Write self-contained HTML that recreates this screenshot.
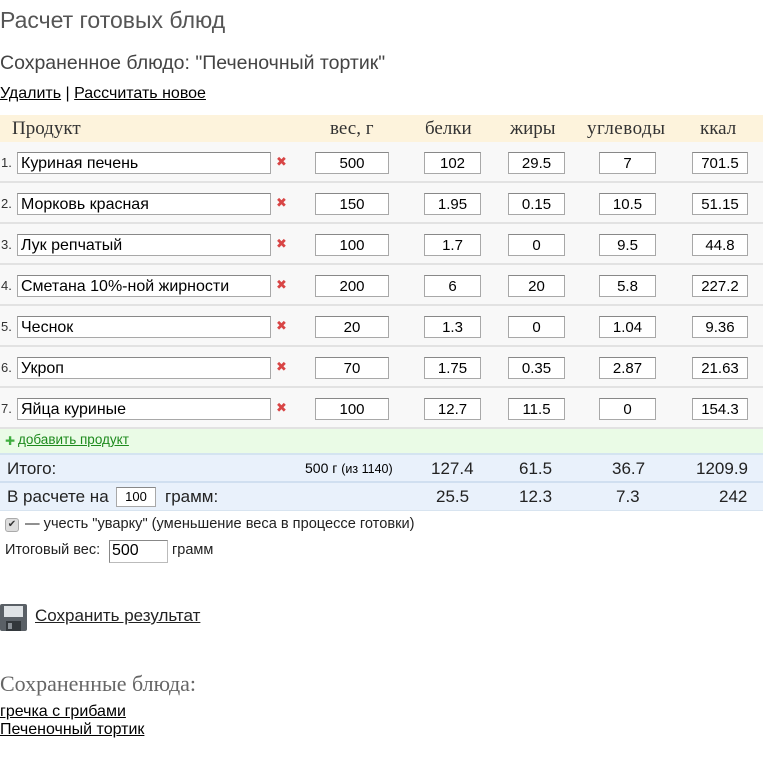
<!DOCTYPE html>
<html><head><meta charset="utf-8"><style>
*{margin:0;padding:0;box-sizing:border-box}
body{width:770px;height:770px;background:#fff;font-family:"Liberation Sans","DejaVu Sans",sans-serif;color:#000;position:relative;overflow:hidden}
.a{position:absolute;white-space:nowrap}
.serif{font-family:"Liberation Serif","DejaVu Serif",serif}
u{text-decoration:underline}
.row{position:absolute;left:0;width:763px;height:41px;background:#f8f8f8;border-bottom:2px solid #e2e2e2}
.in{position:absolute;height:22px;background:#fff;border:1px solid #a8a8a8;border-top-color:#888;font-size:15px;line-height:21px;text-align:center}
.p{text-align:left;padding-left:3px;font-size:16px}
.x{position:absolute;color:#d84545;font-size:13px;font-weight:bold}
.n{position:absolute;font-size:13px;color:#333}
.h{position:absolute;font-size:19px;top:118px;color:#333}
.t{position:absolute;font-size:17px;color:#222}
</style></head><body>
<div class="a" style="left:0;top:7px;font-size:23px;color:#555">Расчет готовых блюд</div>
<div class="a" style="left:0;top:52px;font-size:19.5px;color:#444">Сохраненное блюдо: "Печеночный тортик"</div>
<div class="a" style="left:0;top:85px;font-size:16px"><u>Удалить</u> | <u>Рассчитать новое</u></div>

<div class="a" style="left:0;top:115px;width:763px;height:27px;background:#fdf3dc"></div>
<div class="h serif" style="left:12px">Продукт</div>
<div class="h serif" style="left:330px">вес, г</div>
<div class="h serif" style="left:425px">белки</div>
<div class="h serif" style="left:510px">жиры</div>
<div class="h serif" style="left:587px;letter-spacing:0.5px">углеводы</div>
<div class="h serif" style="left:700px">ккал</div>

<div class="row" style="top:142px"></div>
<div class="row" style="top:183px"></div>
<div class="row" style="top:224px"></div>
<div class="row" style="top:265px"></div>
<div class="row" style="top:306px"></div>
<div class="row" style="top:347px"></div>
<div class="row" style="top:388px"></div>

<div class="n" style="left:1px;top:155px">1.</div><div class="in p" style="left:17px;top:152px;width:254px">Куриная печень</div><div class="x" style="left:276px;top:154px">✖</div><div class="in" style="left:315px;top:152px;width:74px">500</div><div class="in" style="left:424px;top:152px;width:57px">102</div><div class="in" style="left:508px;top:152px;width:57px">29.5</div><div class="in" style="left:599px;top:152px;width:57px">7</div><div class="in" style="left:692px;top:152px;width:56px">701.5</div>
<div class="n" style="left:1px;top:196px">2.</div><div class="in p" style="left:17px;top:193px;width:254px">Морковь красная</div><div class="x" style="left:276px;top:195px">✖</div><div class="in" style="left:315px;top:193px;width:74px">150</div><div class="in" style="left:424px;top:193px;width:57px">1.95</div><div class="in" style="left:508px;top:193px;width:57px">0.15</div><div class="in" style="left:599px;top:193px;width:57px">10.5</div><div class="in" style="left:692px;top:193px;width:56px">51.15</div>
<div class="n" style="left:1px;top:237px">3.</div><div class="in p" style="left:17px;top:234px;width:254px">Лук репчатый</div><div class="x" style="left:276px;top:236px">✖</div><div class="in" style="left:315px;top:234px;width:74px">100</div><div class="in" style="left:424px;top:234px;width:57px">1.7</div><div class="in" style="left:508px;top:234px;width:57px">0</div><div class="in" style="left:599px;top:234px;width:57px">9.5</div><div class="in" style="left:692px;top:234px;width:56px">44.8</div>
<div class="n" style="left:1px;top:278px">4.</div><div class="in p" style="left:17px;top:275px;width:254px">Сметана 10%-ной жирности</div><div class="x" style="left:276px;top:277px">✖</div><div class="in" style="left:315px;top:275px;width:74px">200</div><div class="in" style="left:424px;top:275px;width:57px">6</div><div class="in" style="left:508px;top:275px;width:57px">20</div><div class="in" style="left:599px;top:275px;width:57px">5.8</div><div class="in" style="left:692px;top:275px;width:56px">227.2</div>
<div class="n" style="left:1px;top:319px">5.</div><div class="in p" style="left:17px;top:316px;width:254px">Чеснок</div><div class="x" style="left:276px;top:318px">✖</div><div class="in" style="left:315px;top:316px;width:74px">20</div><div class="in" style="left:424px;top:316px;width:57px">1.3</div><div class="in" style="left:508px;top:316px;width:57px">0</div><div class="in" style="left:599px;top:316px;width:57px">1.04</div><div class="in" style="left:692px;top:316px;width:56px">9.36</div>
<div class="n" style="left:1px;top:360px">6.</div><div class="in p" style="left:17px;top:357px;width:254px">Укроп</div><div class="x" style="left:276px;top:359px">✖</div><div class="in" style="left:315px;top:357px;width:74px">70</div><div class="in" style="left:424px;top:357px;width:57px">1.75</div><div class="in" style="left:508px;top:357px;width:57px">0.35</div><div class="in" style="left:599px;top:357px;width:57px">2.87</div><div class="in" style="left:692px;top:357px;width:56px">21.63</div>
<div class="n" style="left:1px;top:401px">7.</div><div class="in p" style="left:17px;top:398px;width:254px">Яйца куриные</div><div class="x" style="left:276px;top:400px">✖</div><div class="in" style="left:315px;top:398px;width:74px">100</div><div class="in" style="left:424px;top:398px;width:57px">12.7</div><div class="in" style="left:508px;top:398px;width:57px">11.5</div><div class="in" style="left:599px;top:398px;width:57px">0</div><div class="in" style="left:692px;top:398px;width:56px">154.3</div>

<div class="a" style="left:0;top:429px;width:763px;height:26px;background:#eafbe6;border-bottom:2px solid #d4e4f0"></div>
<div class="a" style="left:5px;top:434px;color:#3fae3f;font-size:12px;font-weight:bold">✚</div>
<div class="a" style="left:18px;top:432px;font-size:13.5px;color:#1d8a1d"><u>добавить продукт</u></div>

<div class="a" style="left:0;top:455px;width:763px;height:28px;background:#e9f1fb;border-bottom:2px solid #d0dff0"></div>
<div class="t" style="left:7px;top:459px">Итого:</div>
<div class="a" style="left:305px;top:460px;font-size:14px">500 г <span style="font-size:12.5px">(из 1140)</span></div>
<div class="t" style="left:431px;top:459px">127.4</div>
<div class="t" style="left:519px;top:459px">61.5</div>
<div class="t" style="left:612px;top:459px">36.7</div>
<div class="t" style="left:696px;top:459px">1209.9</div>

<div class="a" style="left:0;top:483px;width:763px;height:28px;background:#e9f1fb;border-bottom:1px solid #d8e4f0"></div>
<div class="t" style="left:7px;top:487px">В расчете на</div>
<div class="in" style="left:116px;top:487px;width:40px;height:20px;font-size:13px;line-height:18px">100</div>
<div class="t" style="left:165px;top:487px">грамм:</div>
<div class="t" style="left:436px;top:487px">25.5</div>
<div class="t" style="left:519px;top:487px">12.3</div>
<div class="t" style="left:616px;top:487px">7.3</div>
<div class="t" style="left:719px;top:487px">242</div>

<div class="a" style="left:5px;top:518px;width:14px;height:14px;border:1px solid #aaa;border-radius:3px;background:#ddd;font-size:10px;line-height:12px;text-align:center;color:#333">✔</div>
<div class="a" style="left:25px;top:516px;font-size:14.6px;color:#222">— учесть "уварку" (уменьшение веса в процессе готовки)</div>
<div class="a" style="left:5px;top:542px;font-size:14.5px;color:#222">Итоговый вес:</div>
<div class="a" style="left:109px;top:540px;width:59px;height:23px;border:1px solid #bbb;border-top-color:#888;border-left-color:#888;font-size:16px;line-height:20px;padding-left:2px">500</div>
<div class="a" style="left:172px;top:542px;font-size:14.5px;color:#222">грамм</div>

<svg class="a" style="left:0;top:604px" width="27" height="27" viewBox="0 0 27 27"><rect x="0" y="0" width="27" height="27" rx="2" fill="#5a6066"/><rect x="4" y="2" width="19" height="11" fill="#dfe3e6"/><rect x="6" y="17" width="15" height="10" fill="#33383c"/><rect x="8" y="19" width="4" height="6" fill="#8a9096"/></svg>
<div class="a" style="left:35px;top:606px;font-size:17px;color:#222"><u>Сохранить результат</u></div>

<div class="a serif" style="left:0;top:671px;font-size:22px;color:#666">Сохраненные блюда:</div>
<div class="a" style="left:0;top:703px;font-size:16px"><u>гречка с грибами</u></div>
<div class="a" style="left:0;top:721px;font-size:16px"><u>Печеночный тортик</u></div>
</body></html>
